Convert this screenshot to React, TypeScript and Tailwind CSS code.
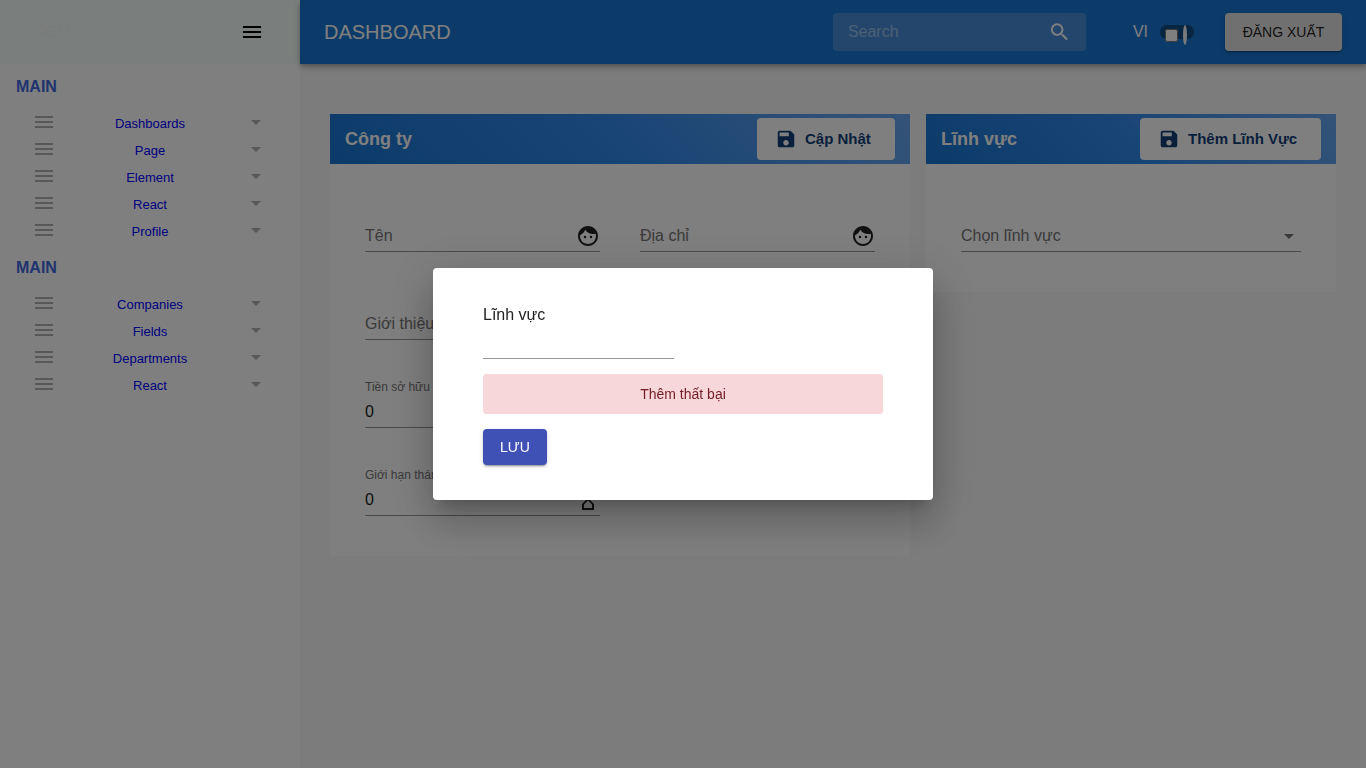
import { useState } from "react";
import type { ReactNode } from "react";
import { MdMenu, MdArrowDropDown, MdSearch, MdSave, MdFace, MdHourglassEmpty } from "react-icons/md";

const menus = [
  { id: "top", items: ["Dashboards", "Page", "Element", "React", "Profile"] },
  { id: "bottom", items: ["Companies", "Fields", "Departments", "React"] },
];

function Sidebar() {
  return (
    <aside className="w-[300px] shrink-0 bg-white">
      <div className="flex h-16 items-center justify-between bg-[#f5fffa] pl-6 pr-9">
        <span className="text-base text-[#f9f6f8]">LOGO</span>
        <button type="button" aria-label="Menu" className="text-black">
          <MdMenu size={24} />
        </button>
      </div>
      <nav className="flex flex-col gap-[13px] pt-[11px]">
        {menus.map((menu) => (
          <section key={menu.id}>
            <h2 className="px-4 text-base font-bold leading-6 text-[#4169e1]">MAIN</h2>
            <ul className="pt-[9px]">
              {menu.items.map((item) => (
                <li key={item} className="grid h-[27px] grid-cols-[24px_1fr_24px] items-center px-8 text-[#b0b0b0]">
                  <MdMenu size={24} />
                  <a href="#" className="pt-1 text-center text-[13px] leading-5 text-[#0000ff]">
                    {item}
                  </a>
                  <MdArrowDropDown size={24} />
                </li>
              ))}
            </ul>
          </section>
        ))}
      </nav>
    </aside>
  );
}

function TopBar() {
  return (
    <header className="flex h-16 items-center bg-[#1976d2] px-6 text-white shadow-[0_2px_4px_-1px_rgba(0,0,0,0.2),0_4px_5px_0_rgba(0,0,0,0.14),0_1px_10px_0_rgba(0,0,0,0.12)]">
      <h1 className="grow text-xl">DASHBOARD</h1>
      <div className="flex h-[38px] w-[253px] items-center rounded bg-[#4b8cd8] px-[15px]">
        <input
          aria-label="Search"
          placeholder="Search"
          className="min-w-0 grow bg-transparent text-base outline-none placeholder:text-[#96c0ea]"
        />
        <MdSearch size={24} />
      </div>
      <label className="ml-[47px] flex items-center gap-3 text-base">
        VI
        <span className="relative h-[14px] w-[34px] rounded-full bg-[#104a82]">
          <input type="checkbox" className="absolute left-[5px] top-[4px] size-[13px]" />
          <span className="absolute left-[23px] top-0 h-5 w-1 rounded-[50%] bg-[#f5f5f5]" />
        </span>
      </label>
      <button
        type="button"
        className="ml-[31px] h-[38px] w-[117px] whitespace-nowrap rounded bg-[#e0e0e0] text-sm text-black/87 shadow-[0_3px_1px_-2px_rgba(0,0,0,0.2),0_2px_2px_0_rgba(0,0,0,0.14),0_1px_5px_0_rgba(0,0,0,0.12)]"
      >
        ĐĂNG XUẤT
      </button>
    </header>
  );
}

function CardHeader({ title, action, wide }: { title: string; action: string; wide?: boolean }) {
  return (
    <div className="flex h-[50px] items-center justify-between bg-linear-45 from-[#1976d2] via-[#3089ec] to-[#68a8ee] px-[15px]">
      <h2 className="text-lg font-bold text-white">{title}</h2>
      <button
        type="button"
        className={`${wide ? "w-[181px]" : "w-[138px]"} flex h-[42px] items-center gap-2 whitespace-nowrap rounded bg-white pl-[18px] text-[15px] font-bold text-[#133e78]`}
      >
        <MdSave size={22} />
        {action}
      </button>
    </div>
  );
}

function Field({ id, label, value, icon }: { id: string; label: string; value?: string; icon: ReactNode }) {
  const [text, setText] = useState(value ?? "");
  const shrunk = text !== "";
  return (
    <div className="relative flex h-12 flex-col justify-end">
      <label
        htmlFor={id}
        className={
          shrunk
            ? "absolute left-0 top-0 text-xs leading-[14px] text-[#757575]"
            : "absolute left-0 top-5 text-base leading-6 text-[#757575]"
        }
      >
        {label}
      </label>
      <div className="flex h-8 items-center border-b border-[#949494]">
        <input
          id={id}
          value={text}
          onChange={(e) => setText(e.target.value)}
          className="min-w-0 grow bg-transparent text-base text-[#212121] outline-none"
        />
        <span className="text-[#212121]">{icon}</span>
      </div>
    </div>
  );
}

function Dialog() {
  const [name, setName] = useState("");
  return (
    <div className="fixed inset-0 flex items-center justify-center bg-black/50">
      <div
        role="dialog"
        aria-modal="true"
        aria-label="Lĩnh vực"
        className="flex w-full max-w-[500px] flex-col items-start gap-[15px] rounded bg-white px-[50px] py-[35px] shadow-[0_11px_15px_-7px_rgba(0,0,0,0.2),0_24px_38px_3px_rgba(0,0,0,0.14),0_9px_46px_8px_rgba(0,0,0,0.12)]"
      >
        <label className="flex flex-col text-base text-[#212121]">
          Lĩnh vực
          <input
            value={name}
            onChange={(e) => setName(e.target.value)}
            className="mt-[7px] h-[25px] w-[191px] border-b border-[#949494] bg-transparent outline-none"
          />
        </label>
        <p role="alert" className="w-full rounded-[3px] bg-[#f8d7da] text-center text-sm leading-10 text-[#721c24]">
          Thêm thất bại
        </p>
        <button
          type="button"
          className="h-9 w-16 rounded bg-[#3f51b5] text-sm text-white shadow-[0_3px_1px_-2px_rgba(0,0,0,0.2),0_2px_2px_0_rgba(0,0,0,0.14),0_1px_5px_0_rgba(0,0,0,0.12)]"
        >
          LƯU
        </button>
      </div>
    </div>
  );
}

export default function App() {
  const face = <MdFace size={24} />;
  const hourglass = <MdHourglassEmpty size={24} />;
  return (
    <div className="flex min-h-screen bg-[#f8f8f8] font-['Liberation_Sans',Arial,sans-serif]">
      <Sidebar />
      <div className="flex min-w-0 grow flex-col">
        <TopBar />
        <main className="grid grid-cols-[580fr_410fr] items-start gap-4 px-[30px] pt-[50px]">
          <section className="bg-[#fefefe]">
            <CardHeader title="Công ty" action="Cập Nhật" />
            <form className="grid grid-cols-2 gap-10 px-[35px] py-10">
              <Field id="name" label="Tên" icon={face} />
              <Field id="address" label="Địa chỉ" icon={face} />
              <div className="col-span-2">
                <Field id="about" label="Giới thiệu" icon={face} />
              </div>
              <div className="col-start-1">
                <Field id="money" label="Tiền sở hữu" value="0" icon={hourglass} />
              </div>
              <div className="col-start-1">
                <Field id="month" label="Giới hạn tháng" value="0" icon={hourglass} />
              </div>
            </form>
          </section>
          <section className="bg-[#fefefe]">
            <CardHeader title="Lĩnh vực" action="Thêm Lĩnh Vực" wide />
            <div className="px-[35px] py-10">
              <div className="flex h-12 items-end">
                <div className="relative h-8 w-full border-b border-[#949494]">
                  <select
                    aria-label="Chọn lĩnh vực"
                    className="h-full w-full appearance-none bg-transparent text-base text-[#757575] outline-none"
                  >
                    <option>Chọn lĩnh vực</option>
                  </select>
                  <MdArrowDropDown size={24} className="pointer-events-none absolute right-0 top-1 text-[#757575]" />
                </div>
              </div>
            </div>
          </section>
        </main>
      </div>
      <Dialog />
    </div>
  );
}
